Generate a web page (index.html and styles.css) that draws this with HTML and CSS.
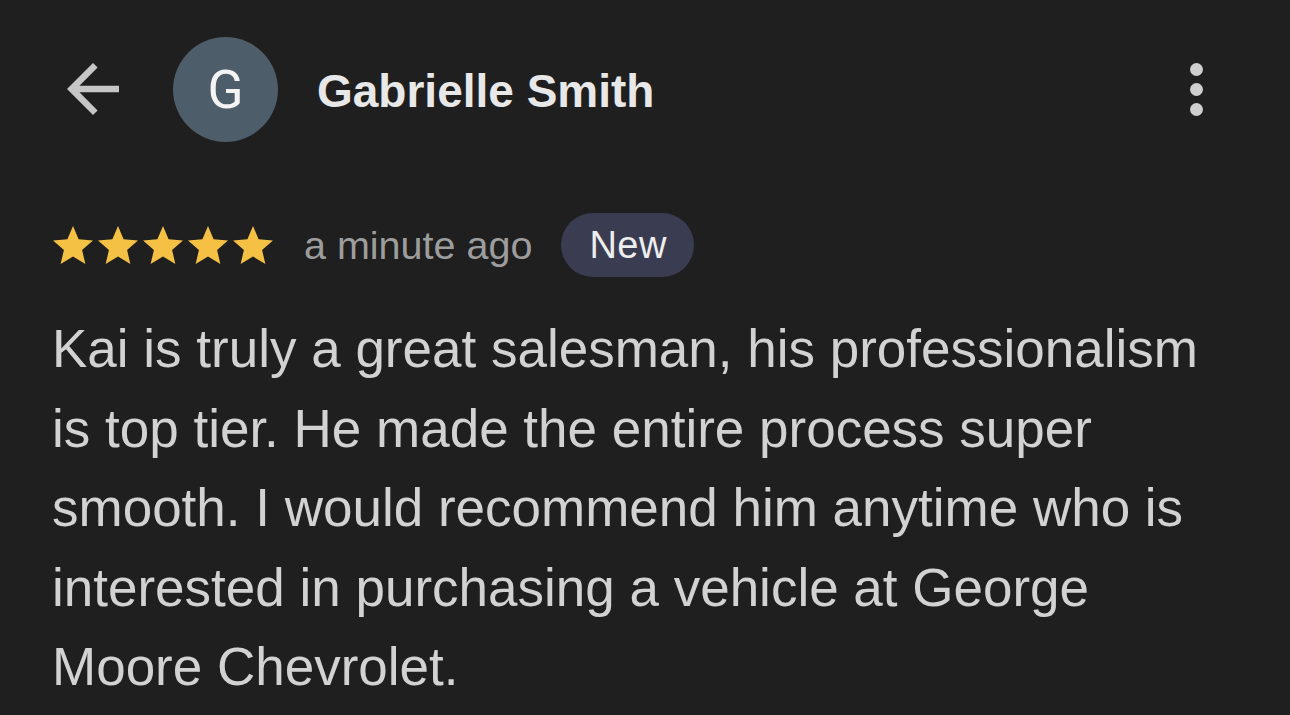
FILE: index.html
```html
<!DOCTYPE html>
<html lang="en">
<head>
<meta charset="utf-8">
<title>Review</title>
<link rel="stylesheet" href="styles.css">
</head>
<body>
<div class="screen">
  <header class="header">
    <svg class="back" width="52" height="52" viewBox="4 4 16 16" aria-hidden="true">
      <path d="M20 11H7.83l5.59-5.59L12 4l-8 8 8 8 1.41-1.41L7.83 13H20v-2z"/>
    </svg>
    <div class="avatar">G</div>
    <div class="name">Gabrielle Smith</div>
    <div class="menu" aria-label="More options">
      <span class="dot"></span><span class="dot"></span><span class="dot"></span>
    </div>
  </header>

  <div class="meta">
    <div class="stars">
      <svg class="star" viewBox="2 2 20 19"><path d="M12 17.27L18.18 21l-1.64-7.03L22 9.24l-7.19-.61L12 2 9.19 8.63 2 9.24l5.46 4.73L5.82 21z"/></svg>
      <svg class="star" viewBox="2 2 20 19"><path d="M12 17.27L18.18 21l-1.64-7.03L22 9.24l-7.19-.61L12 2 9.19 8.63 2 9.24l5.46 4.73L5.82 21z"/></svg>
      <svg class="star" viewBox="2 2 20 19"><path d="M12 17.27L18.18 21l-1.64-7.03L22 9.24l-7.19-.61L12 2 9.19 8.63 2 9.24l5.46 4.73L5.82 21z"/></svg>
      <svg class="star" viewBox="2 2 20 19"><path d="M12 17.27L18.18 21l-1.64-7.03L22 9.24l-7.19-.61L12 2 9.19 8.63 2 9.24l5.46 4.73L5.82 21z"/></svg>
      <svg class="star" viewBox="2 2 20 19"><path d="M12 17.27L18.18 21l-1.64-7.03L22 9.24l-7.19-.61L12 2 9.19 8.63 2 9.24l5.46 4.73L5.82 21z"/></svg>
    </div>
    <span class="time">a minute ago</span>
    <span class="badge">New</span>
  </div>

  <p class="review">Kai is truly a great salesman, his professionalism is top tier. He made the entire process super smooth. I would recommend him anytime who is interested in purchasing a vehicle at George Moore Chevrolet.</p>
</div>
</body>
</html>
```

FILE: styles.css
```css
html, body {
  margin: 0;
  padding: 0;
  background: #1f1f1f;
}

.screen {
  width: 1290px;
  height: 715px;
  overflow: hidden;
  background: #1f1f1f;
  font-family: "Liberation Sans", Arial, sans-serif;
}

.header {
  display: flex;
  align-items: center;
  padding: 37px 87px 0 67px;
  height: 105px;
}

.back {
  display: block;
  fill: #c6c6c6;
  margin-top: -1px;
}

.avatar {
  width: 105px;
  height: 105px;
  border-radius: 50%;
  background: #4d5d69;
  color: #f4f4f4;
  font-family: Roboto, "Liberation Sans", sans-serif;
  font-size: 53px;
  display: flex;
  align-items: center;
  justify-content: center;
  margin-left: 54px;
}

.name {
  margin-left: 39px;
  font-size: 46px;
  font-weight: bold;
  color: #e8e8e8;
  flex: 1;
  padding-top: 2px;
}

.menu {
  display: flex;
  flex-direction: column;
  gap: 7px;
  align-items: center;
}

.dot {
  width: 13px;
  height: 13px;
  border-radius: 50%;
  background: #cfcfcf;
}

.meta {
  display: flex;
  align-items: center;
  margin-top: 71px;
  padding-left: 53px;
  height: 64px;
}

.stars {
  display: flex;
  gap: 5px;
}

.star {
  width: 40px;
  height: 38px;
  fill: #f5c144;
}

.time {
  margin-left: 31px;
  font-size: 39.5px;
  color: #9d9d9d;
}

.badge {
  margin-left: 29px;
  height: 64px;
  padding: 0 27px 0 28px;
  border-radius: 32px;
  background: #3a3d51;
  color: #eeeeee;
  font-size: 38px;
  letter-spacing: 0.5px;
  display: flex;
  align-items: center;
}

.review {
  margin: 32px 0 0 0;
  padding: 0 50px 0 52px;
  font-size: 53px;
  line-height: 79.5px;
  color: #d2d2d2;
}
```
